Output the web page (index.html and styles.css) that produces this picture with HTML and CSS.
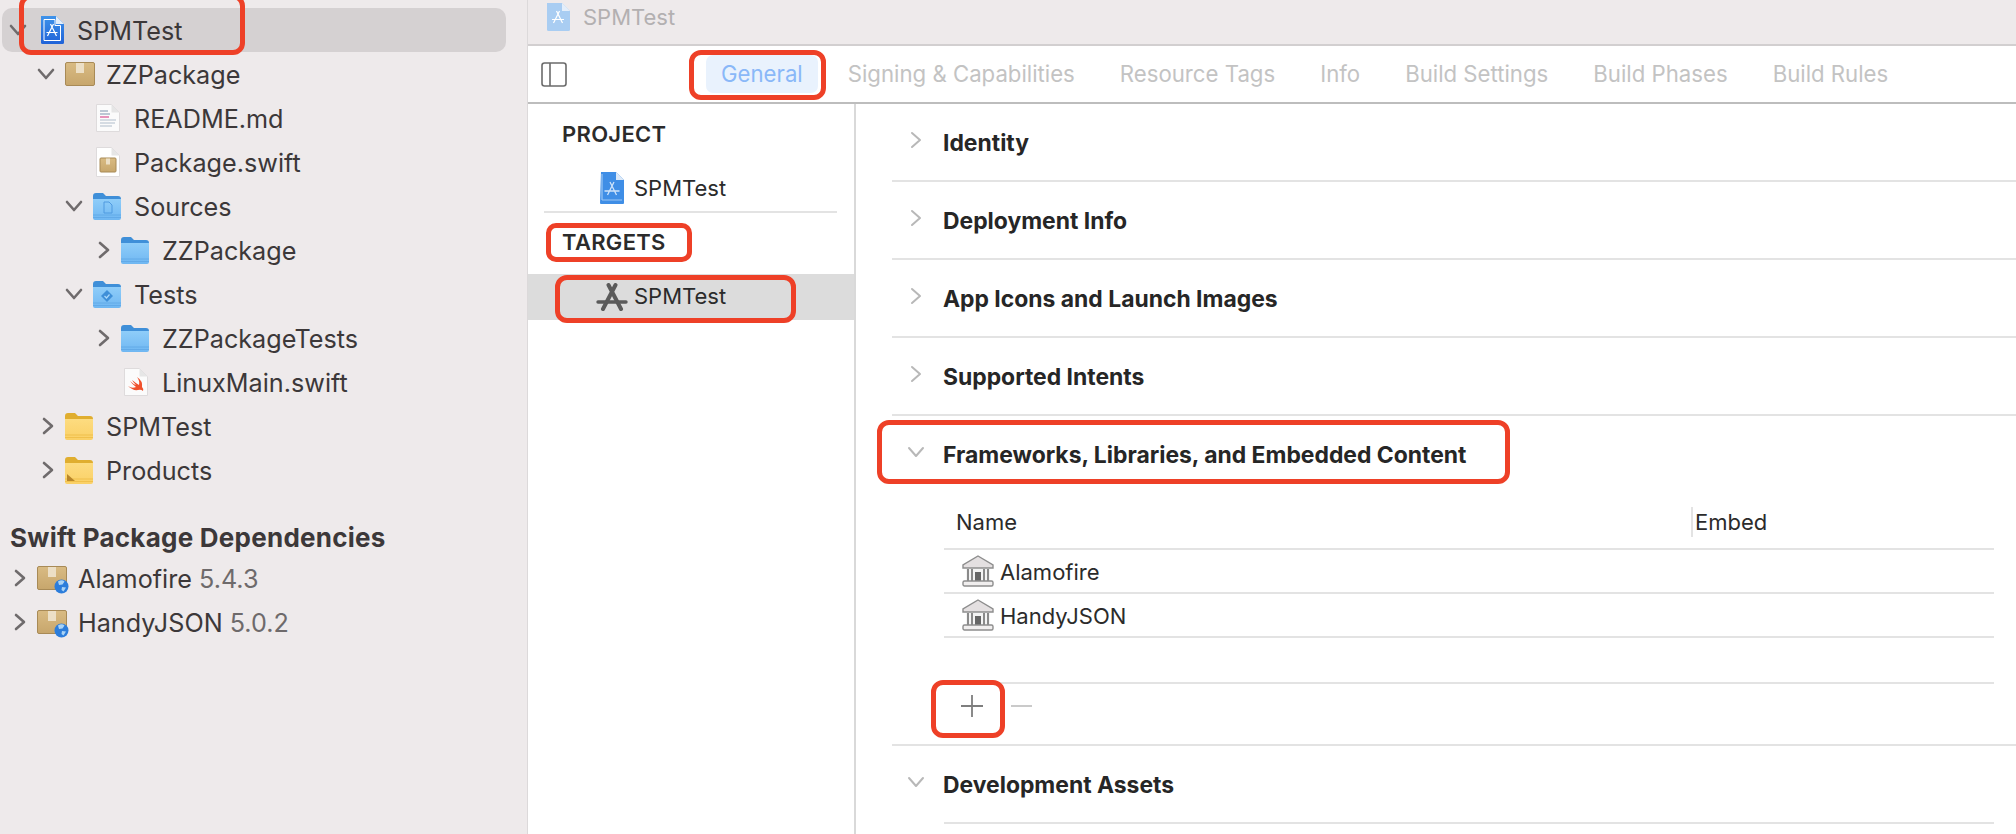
FILE: index.html
```html
<!DOCTYPE html>
<html>
<head>
    <title>SPMTest</title>
    <meta name="viewport" content="width=device-width, initial-scale=1.0">
    <link rel="stylesheet" href="styles.css">
</head>
<body>
    <svg class="icon-defs" width="0" height="0">
        <defs>
            <linearGradient id="gradBlue" x1="0" y1="0" x2="0" y2="1"><stop offset="0" stop-color="#3f93ea"/><stop offset="1" stop-color="#1f62d8"/></linearGradient>
            <linearGradient id="gradBox" x1="0" y1="0" x2="0" y2="1"><stop offset="0" stop-color="#d9bb83"/><stop offset="1" stop-color="#c7a66c"/></linearGradient>
            <linearGradient id="gradFolder" x1="0" y1="0" x2="0" y2="1"><stop offset="0" stop-color="#8fcdf9"/><stop offset="1" stop-color="#6fb7f2"/></linearGradient>
            <linearGradient id="gradYellow" x1="0" y1="0" x2="0" y2="1"><stop offset="0" stop-color="#fddc80"/><stop offset="1" stop-color="#fad066"/></linearGradient>
        </defs>
        <symbol id="i-project" viewBox="0 0 24 28">
            <path d="M1 0h15l8 8v18.500q0 1.500-1.500 1.500h-20q-1.500 0-1.500-1.500z" fill="url(#gradBlue)"/>
            <path d="M16 0l8 8h-8z" fill="#e4eefa"/>
            <path d="M4 3.500h11v6h5.500v15h-16.500z" fill="none" stroke="#fff" stroke-width="1"/>
            <path d="M13.500 8l-6 12M10.500 8l6 12M6.500 16.500h11" fill="none" stroke="#fff" stroke-width="1.200"/>
        </symbol>
        <symbol id="i-project-pale" viewBox="0 0 24 28">
            <path d="M1 0h15l8 8v18.500q0 1.500-1.500 1.500h-20q-1.500 0-1.500-1.500z" fill="#a9cdf2"/>
            <path d="M16 0l8 8h-8z" fill="#e4eefa"/>
            <path d="M13.500 8l-6 12M10.500 8l6 12M6 16.500h12" fill="none" stroke="#fff" stroke-width="1.200"/>
        </symbol>
        <symbol id="i-project-bright" viewBox="0 0 24 32">
            <path d="M1 0h15l8 8v23q0 1-1 1h-22q-1 0-1-1z" fill="#3f8ee6"/>
            <path d="M16 0l8 8h-8z" fill="#dce9f8"/>
            <path d="M2 28h20M2 2v26" stroke="#9cc6f3" stroke-width="1.200" fill="none"/>
            <path d="M14 10l-6.500 13M10 10l6.500 13M4.500 19h15" fill="none" stroke="#cfe3fa" stroke-width="1.300"/>
        </symbol>
        <symbol id="i-box" viewBox="0 0 30 24">
            <rect x=".5" y=".5" width="29" height="23" rx="1.500" fill="url(#gradBox)" stroke="#a88a56"/>
            <rect x="11" y="1" width="8" height="10" fill="#ecdfc6"/>
        </symbol>
        <symbol id="i-box-globe" viewBox="0 0 32 28">
            <rect x=".5" y=".5" width="29" height="23" rx="1.500" fill="url(#gradBox)" stroke="#a88a56"/>
            <rect x="11" y="1" width="8" height="10" fill="#ecdfc6"/>
            <circle cx="24.500" cy="20.500" r="7" fill="#2c7ddb"/>
            <path d="M21 15.500q4-2.500 6.500 0l-2 3-3.500.5zM25 21l4 .5-2.500 4-2-1.500z" fill="#a9d3f5"/>
        </symbol>
        <symbol id="i-doc-text" viewBox="0 0 24 28">
            <path d="M.5.500h15l8 8v19h-23z" fill="#fbfbfb" stroke="#dedbdc"/>
            <path d="M15.500.500v8h8z" fill="#e6e6e6"/>
            <path d="M4 7h8M4 10h10" stroke="#7d93ad" stroke-width="1"/>
            <path d="M4 13h9" stroke="#d94f90" stroke-width="1.200"/>
            <path d="M4 16h16M4 19h15M4 22h12" stroke="#b0bdcb" stroke-width="1"/>
        </symbol>
        <symbol id="i-doc-box" viewBox="0 0 24 30">
            <path d="M.5.500h15l8 8v21h-23z" fill="#fff" stroke="#dedbdc"/>
            <path d="M15.500.500v8h8z" fill="#e6e6e6"/>
            <rect x="4" y="11" width="16" height="14" rx="1" fill="url(#gradBox)" stroke="#a88a56"/>
            <rect x="10" y="11.500" width="4" height="6" fill="#ecdfc6"/>
        </symbol>
        <symbol id="i-doc-swift" viewBox="0 0 24 28">
            <path d="M.5.500h15l8 8v19h-23z" fill="#fbfbfb" stroke="#dedbdc"/>
            <path d="M15.500.500v8h8z" fill="#e6e6e6"/>
            <path d="M13 9q6 4 5 10 2 2 1 4-2-2-5-1-5 1-10-4 4 3 8 1-4-3-6-6 3 3 6 4-3-3-4-5 5 4 7 5 1-4-2-8z" fill="#f0512c"/>
        </symbol>
        <symbol id="i-folder" viewBox="0 0 28 27">
            <path d="M0 3q0-3 3-3h7l3 3h12q3 0 3 3v5h-28z" fill="#3f8fd8"/>
            <path d="M0 6h28v19q0 2-2 2h-24q-2 0-2-2z" fill="url(#gradFolder)"/>
            <path d="M0 22h28M0 24.500h28" stroke="#5ea6e4" stroke-width=".8"/>
        </symbol>
        <symbol id="i-folder-src" viewBox="0 0 28 27">
            <use href="#i-folder"/>
            <path d="M11 9h5l3 3v8h-8z" fill="none" stroke="#4f9ae0" stroke-width="1"/>
        </symbol>
        <symbol id="i-folder-test" viewBox="0 0 28 27">
            <use href="#i-folder"/>
            <path d="M14 9l6 6-6 6-6-6z" fill="#3f8fd8"/>
            <path d="M11.500 15l2 2 3-3.500" fill="none" stroke="#a9d8fb" stroke-width="1.200"/>
        </symbol>
        <symbol id="i-folder-yellow" viewBox="0 0 28 27">
            <path d="M0 3q0-3 3-3h7l3 3h12q3 0 3 3v5h-28z" fill="#e0ae2f"/>
            <path d="M0 6h28v19q0 2-2 2h-24q-2 0-2-2z" fill="url(#gradYellow)"/>
            <path d="M0 22h28M0 24.500h28" stroke="#edbb45" stroke-width=".8"/>
        </symbol>
        <symbol id="i-folder-products" viewBox="0 0 28 27">
            <use href="#i-folder-yellow"/>
            <path d="M2 17l8 7h-8z" fill="#b8862a"/>
        </symbol>
        <symbol id="i-appstore" viewBox="0 0 32 28">
            <g fill="none" stroke="#5a5a5a" stroke-linecap="round">
                <path d="M12.500 2l12.500 24M19.500 2l-12.500 24" stroke-width="4"/>
                <path d="M2 19h28" stroke-width="3.400"/>
            </g>
        </symbol>
        <symbol id="i-bank" viewBox="0 0 32 32">
            <path d="M16 1l15 9v3h-30v-3z" fill="#e4e0e1" stroke="#8d8d8d" stroke-width="1.400"/>
            <rect x="4" y="14" width="24" height="12" fill="#f4f4f4"/>
            <path d="M6 14v12M10 14v12M22 14v12M26 14v12" stroke="#8a8a8a" stroke-width="2"/>
            <rect x="13" y="17" width="6" height="9" fill="#666"/>
            <rect x="1" y="26" width="30" height="5" rx="1.500" fill="#f0eeee" stroke="#8d8d8d" stroke-width="1.400"/>
        </symbol>
        <symbol id="i-right-nav" viewBox="0 0 18 18">
            <path d="M7 2l8 7-8 7" fill="none" stroke-linecap="round" stroke-linejoin="round"/>
        </symbol>
        <symbol id="i-right" viewBox="0 0 18 18">
            <path d="M5 2l8 7-8 7" fill="none" stroke-linecap="round" stroke-linejoin="round"/>
        </symbol>
        <symbol id="i-down" viewBox="0 0 18 18">
            <path d="M2 5l7 8 7-8" fill="none" stroke-linecap="round" stroke-linejoin="round"/>
        </symbol>
    </svg>

    <aside class="navigator">
        <div class="nav-row nav-row-selected depth-0">
            <svg class="chev"><use href="#i-down"/></svg>
            <svg class="nav-icon icon-project"><use href="#i-project"/></svg>
            <span class="nav-label">SPMTest</span>
        </div>
        <div class="nav-row depth-1">
            <svg class="chev"><use href="#i-down"/></svg>
            <svg class="nav-icon icon-box"><use href="#i-box"/></svg>
            <span class="nav-label">ZZPackage</span>
        </div>
        <div class="nav-row depth-2">
            <span class="chev"></span>
            <svg class="nav-icon icon-doc"><use href="#i-doc-text"/></svg>
            <span class="nav-label">README.md</span>
        </div>
        <div class="nav-row depth-2">
            <span class="chev"></span>
            <svg class="nav-icon icon-doc-tall"><use href="#i-doc-box"/></svg>
            <span class="nav-label">Package.swift</span>
        </div>
        <div class="nav-row depth-2">
            <svg class="chev"><use href="#i-down"/></svg>
            <svg class="nav-icon icon-folder"><use href="#i-folder-src"/></svg>
            <span class="nav-label">Sources</span>
        </div>
        <div class="nav-row depth-3">
            <svg class="chev"><use href="#i-right-nav"/></svg>
            <svg class="nav-icon icon-folder"><use href="#i-folder"/></svg>
            <span class="nav-label">ZZPackage</span>
        </div>
        <div class="nav-row depth-2">
            <svg class="chev"><use href="#i-down"/></svg>
            <svg class="nav-icon icon-folder"><use href="#i-folder-test"/></svg>
            <span class="nav-label">Tests</span>
        </div>
        <div class="nav-row depth-3">
            <svg class="chev"><use href="#i-right-nav"/></svg>
            <svg class="nav-icon icon-folder"><use href="#i-folder"/></svg>
            <span class="nav-label">ZZPackageTests</span>
        </div>
        <div class="nav-row depth-3">
            <span class="chev"></span>
            <svg class="nav-icon icon-doc"><use href="#i-doc-swift"/></svg>
            <span class="nav-label">LinuxMain.swift</span>
        </div>
        <div class="nav-row depth-1">
            <svg class="chev"><use href="#i-right-nav"/></svg>
            <svg class="nav-icon icon-folder"><use href="#i-folder-yellow"/></svg>
            <span class="nav-label">SPMTest</span>
        </div>
        <div class="nav-row depth-1">
            <svg class="chev"><use href="#i-right-nav"/></svg>
            <svg class="nav-icon icon-folder"><use href="#i-folder-products"/></svg>
            <span class="nav-label">Products</span>
        </div>

        <h2 class="nav-heading">Swift Package Dependencies</h2>
        <div class="nav-row depth-0">
            <svg class="chev"><use href="#i-right-nav"/></svg>
            <svg class="nav-icon icon-pkg"><use href="#i-box-globe"/></svg>
            <span class="nav-label">Alamofire <span class="version">5.4.3</span></span>
        </div>
        <div class="nav-row depth-0">
            <svg class="chev"><use href="#i-right-nav"/></svg>
            <svg class="nav-icon icon-pkg"><use href="#i-box-globe"/></svg>
            <span class="nav-label">HandyJSON <span class="version">5.0.2</span></span>
        </div>
    </aside>

    <main class="editor">
        <div class="pathbar">
            <svg class="pathbar-icon"><use href="#i-project-pale"/></svg>
            <span>SPMTest</span>
        </div>

        <div class="tabbar">
            <svg class="panel-toggle" viewBox="0 0 26 25">
                <rect x="1" y="1" width="24" height="23" rx="2.500" fill="none" stroke="#6b6b6b" stroke-width="1.600"/>
                <path d="M9 1v23" stroke="#6b6b6b" stroke-width="1.600"/>
            </svg>
            <div class="tabs">
                <span class="tab tab-active">General</span>
                <span class="tab">Signing &amp; Capabilities</span>
                <span class="tab">Resource Tags</span>
                <span class="tab">Info</span>
                <span class="tab">Build Settings</span>
                <span class="tab">Build Phases</span>
                <span class="tab">Build Rules</span>
            </div>
        </div>

        <div class="editor-body">
            <div class="targets">
                <div class="targets-heading targets-heading-first">PROJECT</div>
                <div class="target-row">
                    <svg class="target-icon icon-project-big"><use href="#i-project-bright"/></svg>
                    <span>SPMTest</span>
                </div>
                <div class="targets-rule"></div>
                <div class="targets-heading">TARGETS</div>
                <div class="target-row target-row-selected">
                    <svg class="target-icon icon-appstore"><use href="#i-appstore"/></svg>
                    <span class="target-label">SPMTest</span>
                </div>
            </div>

            <div class="settings">
                <section class="section">
                    <div class="section-head">
                        <svg class="sec-chev"><use href="#i-right"/></svg>
                        <h3>Identity</h3>
                    </div>
                </section>
                <section class="section">
                    <div class="section-head">
                        <svg class="sec-chev"><use href="#i-right"/></svg>
                        <h3>Deployment Info</h3>
                    </div>
                </section>
                <section class="section">
                    <div class="section-head">
                        <svg class="sec-chev"><use href="#i-right"/></svg>
                        <h3>App Icons and Launch Images</h3>
                    </div>
                </section>
                <section class="section">
                    <div class="section-head">
                        <svg class="sec-chev"><use href="#i-right"/></svg>
                        <h3>Supported Intents</h3>
                    </div>
                </section>
                <section class="section">
                    <div class="section-head">
                        <svg class="sec-chev"><use href="#i-down"/></svg>
                        <h3>Frameworks, Libraries, and Embedded Content</h3>
                    </div>
                    <div class="table">
                        <div class="table-head">
                            <span class="col-name">Name</span>
                            <span class="col-embed">Embed</span>
                        </div>
                        <div class="table-row">
                            <svg class="bank-icon"><use href="#i-bank"/></svg>
                            <span class="table-label">Alamofire</span>
                        </div>
                        <div class="table-row">
                            <svg class="bank-icon"><use href="#i-bank"/></svg>
                            <span class="table-label">HandyJSON</span>
                        </div>
                        <div class="table-spacer"></div>
                        <div class="table-tools">
                            <svg class="tool-plus" viewBox="0 0 22 22"><path d="M11 0v22M0 11h22" stroke="#7e7e7e" stroke-width="1.800"/></svg>
                            <svg class="tool-minus" viewBox="0 0 21 4"><path d="M0 2h21" stroke="#c4c4c4" stroke-width="1.800"/></svg>
                        </div>
                    </div>
                </section>
                <section class="section section-open">
                    <div class="section-head">
                        <svg class="sec-chev"><use href="#i-down"/></svg>
                        <h3>Development Assets</h3>
                    </div>
                    <div class="table-rule"></div>
                </section>
            </div>
        </div>
    </main>

    <div class="mark mark-project"></div>
    <div class="mark mark-general"></div>
    <div class="mark mark-targets"></div>
    <div class="mark mark-target"></div>
    <div class="mark mark-frameworks"></div>
    <div class="mark mark-plus"></div>
</body>
</html>
```
FILE: styles.css
```css
* {
    box-sizing: border-box;
}

html, body {
    margin: 0;
    height: 834px;
    overflow: hidden;
}

body {
    position: relative;
    display: flex;
    background-color: #fff;
    font-family: Inter, "Liberation Sans", sans-serif;
    font-size: 24px;
    color: #2b2b2b;
}

.icon-defs {
    flex: none;
}

/* left navigator */
.navigator {
    flex: none;
    width: 528px;
    padding-top: 8px;
    background-color: #eeeaeb;
    border-right: 1px solid #dcd9da;
    color: #3c3839;
    font-size: 25.2px;
}

.nav-row {
    display: flex;
    align-items: center;
    height: 44px;
    margin-left: 2px;
    width: 504px;
    border-radius: 10px;
    white-space: nowrap;
}

.nav-row-selected {
    background-color: #d5d1d2;
}

.nav-label {
    padding-top: 2px;
}

.depth-0 { padding-left: 7px; }
.depth-1 { padding-left: 35px; }
.depth-2 { padding-left: 63px; }
.depth-3 { padding-left: 91px; }

.chev {
    flex: none;
    width: 18px;
    height: 18px;
    margin-right: 10px;
    stroke: #6f6b6c;
    stroke-width: 2.600;
}

.nav-icon {
    flex: none;
    margin-right: 11px;
}

.icon-project { width: 24px; height: 28px; margin-left: 3px; margin-right: 13px; }
.icon-box { width: 30px; height: 24px; }
.icon-doc { width: 24px; height: 28px; margin-left: 3px; margin-right: 14px; }
.icon-doc-tall { width: 24px; height: 30px; margin-left: 3px; margin-right: 14px; }
.icon-folder { width: 28px; height: 27px; margin-right: 13px; }
.icon-pkg { width: 32px; height: 28px; margin-right: 9px; position: relative; top: 2px; }

.version {
    color: #6e6a6b;
}

.nav-heading {
    margin: 24px 0 0 10px;
    height: 40px;
    font-size: 26px;
    font-weight: 700;
    line-height: 44px;
    letter-spacing: .25px;
    white-space: nowrap;
}

/* editor */
.editor {
    flex: 1;
    min-width: 0;
    display: flex;
    flex-direction: column;
}

.pathbar {
    display: flex;
    align-items: center;
    height: 46px;
    padding: 0 0 11px 18px;
    background-color: #eeeaeb;
    border-bottom: 2px solid #d2cfd0;
    color: #b3b0b1;
    font-size: 22px;
}

.pathbar-icon {
    width: 24px;
    height: 28px;
    margin-right: 13px;
}

.tabbar {
    display: flex;
    align-items: center;
    height: 58px;
    padding-left: 13px;
    border-bottom: 2px solid #bdbdbd;
}

.panel-toggle {
    flex: none;
    width: 26px;
    height: 25px;
    margin-right: 139px;
}

.tabs {
    display: flex;
    gap: 15px;
}

.tab {
    height: 38px;
    padding: 0 15px;
    line-height: 38px;
    font-size: 22.200px;
    color: #c3c3c3;
    white-space: nowrap;
}

.tab-active {
    background-color: #e9f2fd;
    border-radius: 7px;
    color: #8ab8f8;
}

.editor-body {
    flex: 1;
    display: flex;
    min-height: 0;
}

/* project and targets list */
.targets {
    flex: none;
    width: 328px;
    border-right: 2px solid #d9d9d9;
}

.targets-heading {
    height: 52px;
    padding-left: 34px;
    font-size: 22px;
    font-weight: 600;
    line-height: 59px;
    letter-spacing: .3px;
}

.targets-heading-first {
    height: 61px;
    padding-top: 7px;
    line-height: 46px;
}

.target-row {
    display: flex;
    align-items: center;
    height: 46px;
    font-size: 22px;
}

.target-row-selected {
    background-color: #dcdcdc;
    margin-top: 9px;
}

.target-label {
    padding-bottom: 2px;
}

.target-icon {
    flex: none;
    margin-right: 10px;
}

.icon-project-big { width: 24px; height: 32px; margin-left: 72px; }
.icon-appstore { width: 32px; height: 28px; margin-left: 68px; margin-right: 6px; }

.targets-rule {
    height: 2px;
    margin: 0 17px 0 16px;
    background-color: #e3e3e3;
}

/* settings sections */
.settings {
    flex: 1;
    min-width: 0;
}

.section {
    margin-left: 36px;
    border-bottom: 2px solid #e3e3e3;
}

.section-open {
    border-bottom: none;
}

.section-head {
    display: flex;
    align-items: center;
    height: 76px;
    padding-left: 15px;
}

.section-head h3 {
    margin: 0;
    padding-top: 2px;
    font-size: 22.900px;
    font-weight: 700;
    color: #262626;
}

.sec-chev {
    flex: none;
    width: 18px;
    height: 18px;
    margin-right: 18px;
    margin-bottom: 4px;
    stroke: #b8b8b8;
    stroke-width: 2;
}

.table {
    margin-left: 52px;
    margin-right: 22px;
}

.table-head {
    display: flex;
    align-items: center;
    height: 58px;
    padding: 6px 0 3px 12px;
    border-bottom: 2px solid #e3e3e3;
    font-size: 22px;
}

.col-name {
    width: 735px;
}

.col-embed {
    height: 30px;
    padding-left: 2px;
    border-left: 2px solid #e3e3e3;
    line-height: 30px;
}

.table-row {
    display: flex;
    align-items: center;
    height: 44px;
    padding-left: 18px;
    border-bottom: 2px solid #e3e3e3;
    font-size: 22px;
}

.table-label {
    padding-top: 2px;
}

.bank-icon {
    flex: none;
    width: 32px;
    height: 32px;
    margin-right: 6px;
}

.table-spacer {
    height: 46px;
    border-bottom: 2px solid #e3e3e3;
}

.table-tools {
    display: flex;
    align-items: flex-start;
    height: 60px;
    padding: 11px 0 0 17px;
}

.tool-plus {
    width: 22px;
    height: 22px;
    margin-right: 28px;
}

.tool-minus {
    width: 21px;
    height: 4px;
    margin-top: 9px;
}

.table-rule {
    height: 2px;
    margin: 0 22px 0 52px;
    background-color: #e3e3e3;
}

/* red annotation boxes drawn over the screenshot */
.mark {
    position: absolute;
    border: 5px solid #ee4027;
    border-radius: 12px;
}

.mark-project { left: 19px; top: -6px; width: 226px; height: 61px; }
.mark-general { left: 689px; top: 50px; width: 137px; height: 50px; }
.mark-targets { left: 546px; top: 223px; width: 146px; height: 39px; border-radius: 10px; }
.mark-target { left: 555px; top: 275px; width: 241px; height: 48px; }
.mark-frameworks { left: 877px; top: 420px; width: 633px; height: 64px; }
.mark-plus { left: 931px; top: 680px; width: 74px; height: 58px; }
```
